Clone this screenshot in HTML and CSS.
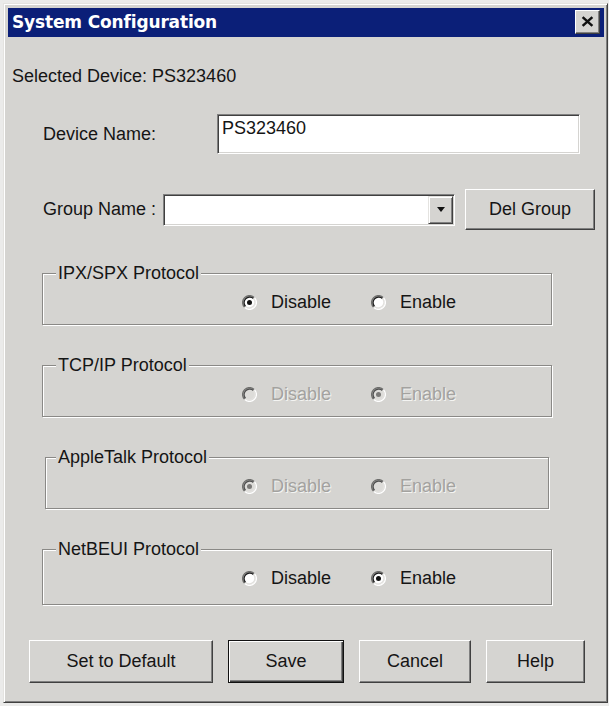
FILE: index.html
```html
<!DOCTYPE html>
<html>
<head>
<meta charset="utf-8">
<title>System Configuration</title>
<link rel="stylesheet" href="styles.css">
</head>
<body>
<div class="window">
  <div class="titlebar">
    <span class="title">System Configuration</span>
    <button class="close" aria-label="Close">
      <svg class="close-x" viewBox="0 0 12 10" width="13" height="11"><path d="M1.5 1 L10.5 9 M10.5 1 L1.5 9"/></svg>
    </button>
  </div>
  <div class="client">
    <p class="selected">Selected Device: PS323460</p>

    <div class="row row-device">
      <label class="lbl lbl-device">Device Name:</label>
      <div class="textbox">PS323460</div>
    </div>

    <div class="row row-group">
      <label class="lbl lbl-group">Group Name :</label>
      <div class="combo">
        <div class="combo-field"></div>
        <div class="combo-btn"><span class="arrow"></span></div>
      </div>
      <button class="btn btn-del">Del Group</button>
    </div>

    <fieldset class="group">
      <legend>IPX/SPX Protocol</legend>
      <div class="radios">
        <span class="opt"><svg class="radio" viewBox="0 0 12 12"><circle class="r-fill" cx="6" cy="6" r="5"/><path class="r-o1" d="M2.11 9.89A5.5 5.5 0 0 1 9.89 2.11"/><path class="r-i1" d="M2.82 9.18A4.5 4.5 0 0 1 9.18 2.82"/><path class="r-o2" d="M9.89 2.11A5.5 5.5 0 0 1 2.11 9.89"/><path class="r-i2" d="M9.18 2.82A4.5 4.5 0 0 1 2.82 9.18"/><circle class="r-dot" cx="6" cy="6" r="2"/></svg><span>Disable</span></span>
        <span class="opt"><svg class="radio" viewBox="0 0 12 12"><circle class="r-fill" cx="6" cy="6" r="5"/><path class="r-o1" d="M2.11 9.89A5.5 5.5 0 0 1 9.89 2.11"/><path class="r-i1" d="M2.82 9.18A4.5 4.5 0 0 1 9.18 2.82"/><path class="r-o2" d="M9.89 2.11A5.5 5.5 0 0 1 2.11 9.89"/><path class="r-i2" d="M9.18 2.82A4.5 4.5 0 0 1 2.82 9.18"/></svg><span>Enable</span></span>
      </div>
    </fieldset>

    <fieldset class="group disabled">
      <legend>TCP/IP Protocol</legend>
      <div class="radios">
        <span class="opt"><svg class="radio" viewBox="0 0 12 12"><circle class="r-fill" cx="6" cy="6" r="5"/><path class="r-o1" d="M2.11 9.89A5.5 5.5 0 0 1 9.89 2.11"/><path class="r-i1" d="M2.82 9.18A4.5 4.5 0 0 1 9.18 2.82"/><path class="r-o2" d="M9.89 2.11A5.5 5.5 0 0 1 2.11 9.89"/><path class="r-i2" d="M9.18 2.82A4.5 4.5 0 0 1 2.82 9.18"/></svg><span>Disable</span></span>
        <span class="opt"><svg class="radio" viewBox="0 0 12 12"><circle class="r-fill" cx="6" cy="6" r="5"/><path class="r-o1" d="M2.11 9.89A5.5 5.5 0 0 1 9.89 2.11"/><path class="r-i1" d="M2.82 9.18A4.5 4.5 0 0 1 9.18 2.82"/><path class="r-o2" d="M9.89 2.11A5.5 5.5 0 0 1 2.11 9.89"/><path class="r-i2" d="M9.18 2.82A4.5 4.5 0 0 1 2.82 9.18"/><circle class="r-dot" cx="6" cy="6" r="2"/></svg><span>Enable</span></span>
      </div>
    </fieldset>

    <fieldset class="group disabled group-narrow">
      <legend>AppleTalk Protocol</legend>
      <div class="radios">
        <span class="opt"><svg class="radio" viewBox="0 0 12 12"><circle class="r-fill" cx="6" cy="6" r="5"/><path class="r-o1" d="M2.11 9.89A5.5 5.5 0 0 1 9.89 2.11"/><path class="r-i1" d="M2.82 9.18A4.5 4.5 0 0 1 9.18 2.82"/><path class="r-o2" d="M9.89 2.11A5.5 5.5 0 0 1 2.11 9.89"/><path class="r-i2" d="M9.18 2.82A4.5 4.5 0 0 1 2.82 9.18"/><circle class="r-dot" cx="6" cy="6" r="2"/></svg><span>Disable</span></span>
        <span class="opt"><svg class="radio" viewBox="0 0 12 12"><circle class="r-fill" cx="6" cy="6" r="5"/><path class="r-o1" d="M2.11 9.89A5.5 5.5 0 0 1 9.89 2.11"/><path class="r-i1" d="M2.82 9.18A4.5 4.5 0 0 1 9.18 2.82"/><path class="r-o2" d="M9.89 2.11A5.5 5.5 0 0 1 2.11 9.89"/><path class="r-i2" d="M9.18 2.82A4.5 4.5 0 0 1 2.82 9.18"/></svg><span>Enable</span></span>
      </div>
    </fieldset>

    <fieldset class="group group-last">
      <legend>NetBEUI Protocol</legend>
      <div class="radios">
        <span class="opt"><svg class="radio" viewBox="0 0 12 12"><circle class="r-fill" cx="6" cy="6" r="5"/><path class="r-o1" d="M2.11 9.89A5.5 5.5 0 0 1 9.89 2.11"/><path class="r-i1" d="M2.82 9.18A4.5 4.5 0 0 1 9.18 2.82"/><path class="r-o2" d="M9.89 2.11A5.5 5.5 0 0 1 2.11 9.89"/><path class="r-i2" d="M9.18 2.82A4.5 4.5 0 0 1 2.82 9.18"/></svg><span>Disable</span></span>
        <span class="opt"><svg class="radio" viewBox="0 0 12 12"><circle class="r-fill" cx="6" cy="6" r="5"/><path class="r-o1" d="M2.11 9.89A5.5 5.5 0 0 1 9.89 2.11"/><path class="r-i1" d="M2.82 9.18A4.5 4.5 0 0 1 9.18 2.82"/><path class="r-o2" d="M9.89 2.11A5.5 5.5 0 0 1 2.11 9.89"/><path class="r-i2" d="M9.18 2.82A4.5 4.5 0 0 1 2.82 9.18"/><circle class="r-dot" cx="6" cy="6" r="2"/></svg><span>Enable</span></span>
      </div>
    </fieldset>

    <div class="buttons">
      <button class="btn btn-default">Set to Default</button>
      <button class="btn btn-save">Save</button>
      <button class="btn btn-cancel">Cancel</button>
      <button class="btn btn-help">Help</button>
    </div>
  </div>
</div>
</body>
</html>
```
FILE: styles.css
```css
html, body {
  margin: 0;
  padding: 0;
}
body {
  background: #ebebea;
  font-family: "Liberation Sans", Arial, sans-serif;
  font-size: 18px;
  line-height: 21px;
  color: #151515;
}
.window {
  box-sizing: border-box;
  width: 605px;
  height: 700px;
  margin: 3px 0 0 3px;
  padding: 4px 3px 3px 4px;
  background: #d5d4d1;
  border: 1px solid;
  border-color: #e4e3e0 #404040 #404040 #e4e3e0;
  box-shadow: inset 1px 1px 0 #ffffff, inset -1px -1px 0 #808080;
  overflow: hidden;
}
.titlebar {
  height: 29px;
  background: #0b1f78;
  display: flex;
  align-items: center;
  justify-content: space-between;
  padding: 0 4px 0 4px;
}
.title {
  font-family: "DejaVu Sans", Verdana, sans-serif;
  font-weight: bold;
  font-size: 17px;
  letter-spacing: -0.15px;
  color: #ffffff;
}
.close {
  box-sizing: border-box;
  width: 25px;
  height: 24px;
  padding: 0;
  margin: 0 0 2px 0;
  background: #d5d4d1;
  border: 1px solid;
  border-color: #ffffff #404040 #404040 #ffffff;
  box-shadow: inset -1px -1px 0 #808080;
  display: flex;
  align-items: center;
  justify-content: center;
}
.close-x path {
  stroke: #111;
  stroke-width: 2.3;
  fill: none;
}
.client {
  display: flex;
  flex-direction: column;
  align-items: flex-start;
}
.selected {
  margin: 29px 0 0 4px;
}
.row {
  display: flex;
  align-items: center;
}
.row-device {
  margin-top: 27px;
}
.row-group {
  margin-top: 35px;
}
.lbl {
  margin-left: 35px;
}
.lbl-device {
  width: 174px;
}
.lbl-group {
  width: 120px;
}
.textbox {
  box-sizing: border-box;
  width: 363px;
  height: 40px;
  padding: 3px 4px;
  background: #ffffff;
  border: 1px solid;
  border-color: #808080 #ffffff #ffffff #808080;
  box-shadow: inset 1px 1px 0 #404040, inset -1px -1px 0 #d5d4d1;
}
.combo {
  box-sizing: border-box;
  width: 292px;
  height: 32px;
  padding: 2px;
  background: #ffffff;
  border: 1px solid;
  border-color: #808080 #ffffff #ffffff #808080;
  box-shadow: inset 1px 1px 0 #404040, inset -1px -1px 0 #d5d4d1;
  display: flex;
}
.combo-field {
  flex: 1;
}
.combo-btn {
  box-sizing: border-box;
  width: 25px;
  margin: -1px -1px -1px 0;
  height: calc(100% + 2px);
  background: #d5d4d1;
  border: 1px solid;
  border-color: #e4e3e0 #404040 #404040 #e4e3e0;
  box-shadow: inset 1px 1px 0 #ffffff, inset -1px -1px 0 #808080;
  display: flex;
  align-items: center;
  justify-content: center;
}
.arrow {
  width: 0;
  height: 0;
  border-left: 4.5px solid transparent;
  border-right: 4.5px solid transparent;
  border-top: 5px solid #111;
}
.btn {
  box-sizing: border-box;
  font-family: "Liberation Sans", Arial, sans-serif;
  font-size: 18px;
  line-height: 21px;
  color: #151515;
  background: #d5d4d1;
  border: 1px solid;
  border-color: #ffffff #404040 #404040 #ffffff;
  box-shadow: inset -1px -1px 0 #808080;
  padding: 0;
  margin: 0;
}
.btn-del {
  margin-left: 10px;
  width: 130px;
  height: 41px;
}
.group {
  box-sizing: border-box;
  width: 510px;
  margin: 30px 0 0 34px;
  padding: 8px 0 11px 0;
  border: 1px solid #8a8986;
  box-shadow: 1px 1px 0 #ffffff, inset 1px 1px 0 #ffffff;
  min-inline-size: 0;
}
.row-group + .group {
  margin-top: 33px;
}
.group-narrow {
  width: 504px;
  margin-left: 37px;
}
.group-last {
  padding-bottom: 15px;
}
.group legend {
  margin-left: 13px;
  padding: 0 2px;
  background: #d5d4d1;
}
.group-narrow legend {
  margin-left: 10px;
}
.radios {
  display: grid;
  grid-template-columns: 129px auto;
  padding-left: 199px;
}
.group-narrow .radios {
  padding-left: 196px;
}
.opt {
  display: flex;
  align-items: center;
  gap: 14px;
}
.radio {
  width: 15px;
  height: 15px;
  flex: none;
}
.radio path {
  fill: none;
  stroke-width: 1.1;
}
.r-fill { fill: #ffffff; }
.r-o1 { stroke: #6e6e6c; }
.r-i1 { stroke: #202020; }
.r-o2 { stroke: #ffffff; }
.r-i2 { stroke: #e2e1de; }
.r-dot { fill: #111; }
.disabled .opt span {
  color: #a3a29f;
  text-shadow: 1px 1px 0 #f4f4f2;
}
.disabled .r-fill { fill: #dddcd9; }
.disabled .r-i1 { stroke: #505050; }
.disabled .r-dot { fill: #7a7977; }
.buttons {
  display: flex;
  gap: 15px;
  margin: 35px 0 0 21px;
}
.buttons .btn {
  height: 43px;
}
.btn-default { width: 184px; }
.btn-save {
  width: 116px;
  border: 1px solid #111;
  box-shadow: inset 1px 1px 0 #ffffff, inset -1px -1px 0 #404040, inset -2px -2px 0 #808080;
}
.btn-cancel { width: 112px; }
.btn-help { width: 99px; }
```
